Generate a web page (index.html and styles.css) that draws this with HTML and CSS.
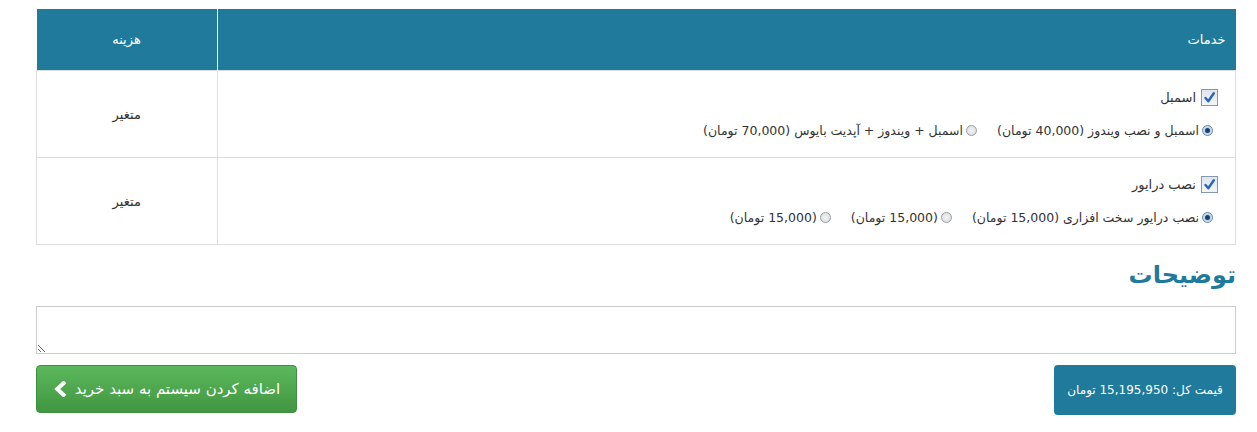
FILE: index.html
```html
<!DOCTYPE html>
<html lang="fa" dir="rtl">
<head>
<meta charset="utf-8">
<link rel="stylesheet" href="styles.css">
</head>
<body>
<div class="wrap">
  <table class="svc">
    <thead>
      <tr><th class="c-name">خدمات</th><th class="c-cost">هزینه</th></tr>
    </thead>
    <tbody>
      <tr>
        <td class="c-name">
          <div class="chk-line"><span class="chk"><svg viewBox="0 0 17 17" width="17" height="17"><path d="M4.5 9 L7.3 12.3 L12.8 4.3" fill="none" stroke="#2a66b8" stroke-width="2.4" stroke-linecap="round" stroke-linejoin="round"/></svg></span><span>اسمبل</span></div>
          <div class="radios">
            <label class="opt"><span class="rad on"></span>اسمبل و نصب ویندوز (40,000 تومان)</label>
            <label class="opt"><span class="rad"></span>اسمبل + ویندوز + آپدیت بایوس (70,000 تومان)</label>
          </div>
        </td>
        <td class="c-cost">متغیر</td>
      </tr>
      <tr>
        <td class="c-name">
          <div class="chk-line"><span class="chk"><svg viewBox="0 0 17 17" width="17" height="17"><path d="M4.5 9 L7.3 12.3 L12.8 4.3" fill="none" stroke="#2a66b8" stroke-width="2.4" stroke-linecap="round" stroke-linejoin="round"/></svg></span><span>نصب درایور</span></div>
          <div class="radios">
            <label class="opt"><span class="rad on"></span>نصب درایور سخت افزاری (15,000 تومان)</label>
            <label class="opt"><span class="rad"></span>(15,000 تومان)</label>
            <label class="opt"><span class="rad"></span>(15,000 تومان)</label>
          </div>
        </td>
        <td class="c-cost">متغیر</td>
      </tr>
    </tbody>
  </table>
  <h2 class="title">توضیحات</h2>
  <textarea class="notes"></textarea>
  <div class="actions">
    <div class="total">قیمت کل: 15,195,950 تومان</div>
    <button class="add">اضافه کردن سیستم به سبد خرید <svg class="chev" viewBox="0 0 14 16" width="14" height="16"><path d="M10.5 2.2 L4.2 8 L10.5 13.8" fill="none" stroke="#fff" stroke-width="4" stroke-linecap="square"/></svg></button>
  </div>
</div>
</body>
</html>
```
FILE: styles.css
```css
html, body { margin: 0; padding: 0; background: #fff; }
body { font-family: "DejaVu Sans", sans-serif; color: #333; }
.wrap { width: 1200px; margin: 9px 21px 0 36px; }
.svc { width: 100%; border-collapse: collapse; font-size: 12.5px; }
.svc th { background: #1f7a9b; color: #fff; font-weight: normal; height: 61px; padding: 0 10px; border-left: 1px solid #fff; font-size: 13px; }
.svc th.c-name { text-align: right; }
.svc th.c-cost { border-left: none; width: 160px; text-align: center; }
.svc td { border: 1px solid #ddd; height: 86px; padding: 0 17px 0 10px; vertical-align: top; }
.svc td.c-cost { text-align: center; vertical-align: middle; font-size: 13px; padding: 0 10px; }
.chk-line { display: flex; align-items: center; gap: 5px; margin-top: 18px; font-size: 13px; }
.chk { width: 15px; height: 15px; border: 1px solid #8799ad; background: linear-gradient(#dfe5ec, #f3f5f8); display: inline-flex; }
.chk svg { margin: -1px; }
.radios { display: flex; gap: 20px; margin: 17px 5px 0 0; font-size: 12.5px; }
.opt { display: flex; align-items: center; gap: 3px; }
.rad { width: 9px; height: 9px; border-radius: 50%; border: 1px solid #9aa2aa; background: radial-gradient(circle, #f4f4f4, #d8d8d8); display: inline-block; position: relative; }
.rad.on::after { content: ""; position: absolute; left: 2px; top: 2px; width: 5px; height: 5px; border-radius: 50%; background: #1d3f6e; }
.rad.on { background: radial-gradient(circle, #9cc8e6, #dde9f2); border-color: #6d8aa3; }
.title { margin: 13px 0 0; font-size: 24px; color: #1f7a9b; font-weight: bold; line-height: 34px; height: 34px; }
.notes { display: block; box-sizing: border-box; width: 1200px; height: 48px; margin: 14px 0 0; border: 1px solid #ccc; resize: vertical; }
.actions { display: flex; justify-content: space-between; align-items: flex-start; margin-top: 11px; }
.total { background: #1f7a9b; color: #fff; font-size: 12px; border-radius: 4px; height: 50px; width: 182px; display: flex; align-items: center; justify-content: center; }
.add { background: linear-gradient(#5cb85c, #419641); border: 1px solid #3e8f3e; border-radius: 4px; color: #fff; font-family: "DejaVu Sans", sans-serif; font-size: 15px; height: 48px; width: 261px; display: flex; align-items: center; justify-content: center; gap: 8px; padding: 0; }
```
